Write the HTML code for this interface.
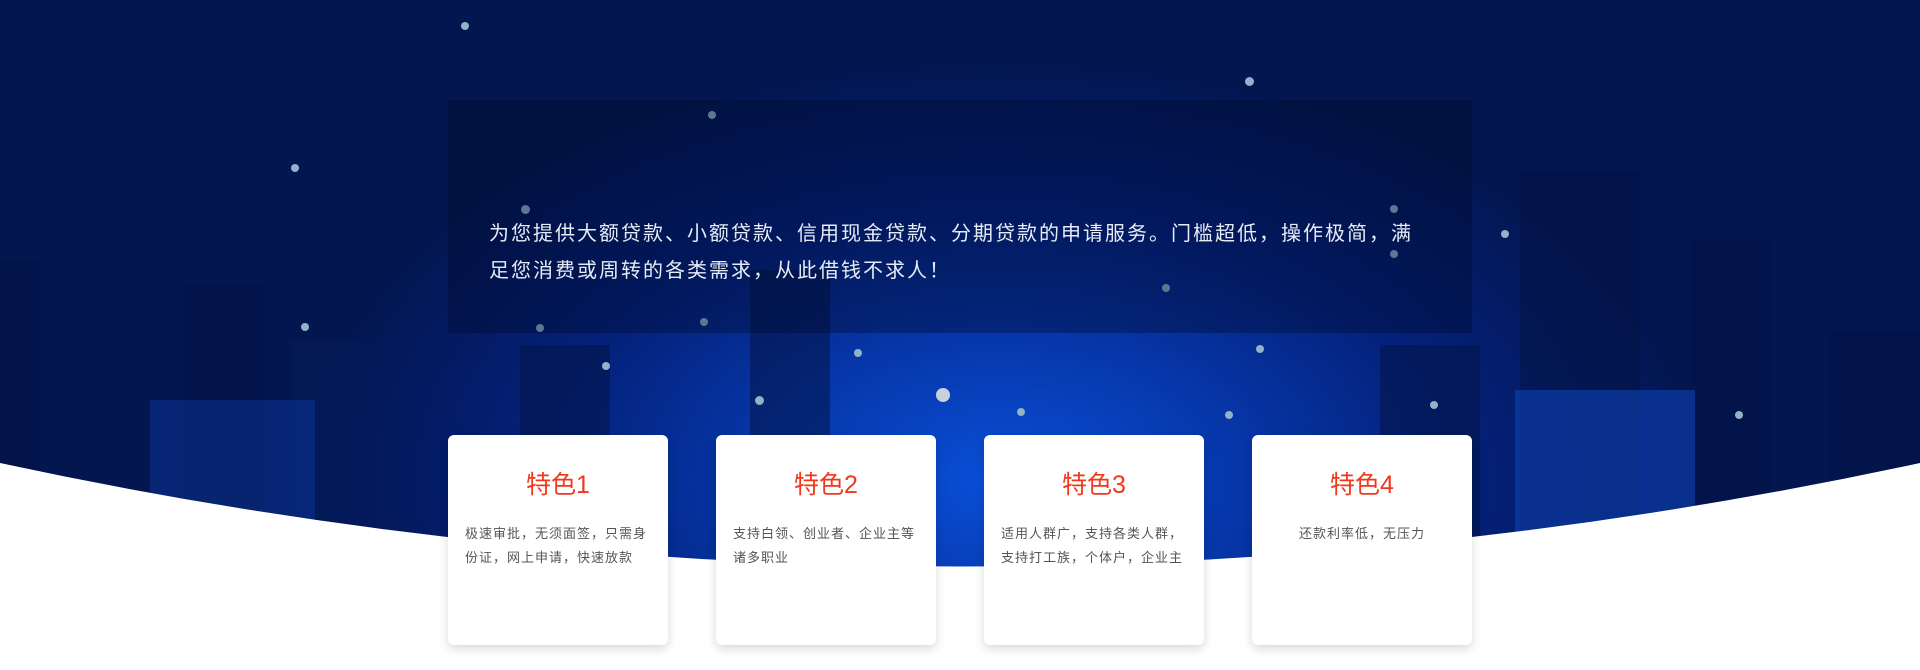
<!DOCTYPE html>
<html><head><meta charset="utf-8">
<style>
*{margin:0;padding:0;box-sizing:border-box}
body{width:1920px;height:670px;overflow:hidden;background:#fff;font-family:"Liberation Sans","Noto Sans CJK SC",sans-serif;position:relative}
.bg{position:absolute;left:0;top:0;width:1920px;height:670px;
background:radial-gradient(ellipse 700px 420px at 1000px 480px,#0a4fd8 0%,#0636a8 35%,#04217a 65%,#031650 100%);}
.bld{position:absolute;background:rgba(3,20,70,.55)}
.star{position:absolute;border-radius:50%;background:#8fb3c9}
.box{position:absolute;left:448px;top:100px;width:1024px;height:233px;background:rgba(0,10,40,.35)}
.box p{position:absolute;left:41px;top:116px;width:932px;color:#e6ecf6;font-size:20px;letter-spacing:2px;line-height:37px}
.card{position:absolute;top:435px;width:220px;height:210px;background:#fff;border-radius:6px;box-shadow:0 4px 10px rgba(0,0,0,.15)}
.card h3{font-weight:normal;color:#f0381c;font-size:25px;text-align:center;margin-top:34px;line-height:32px}
.card p{font-size:13px;letter-spacing:1px;color:#555;line-height:24px;padding:0 17px;margin-top:21px}
</style></head><body>
<div class="bg"></div>
<div class="bld" style="left:0;top:260px;width:40px;height:300px"></div>
<div class="bld" style="left:185px;top:285px;width:80px;height:250px"></div>
<div class="bld" style="left:290px;top:340px;width:110px;height:200px;background:rgba(3,25,90,.5)"></div>
<div class="bld" style="left:520px;top:345px;width:90px;height:200px"></div>
<div class="bld" style="left:750px;top:270px;width:80px;height:280px"></div>
<div class="bld" style="left:1380px;top:345px;width:100px;height:200px"></div>
<div class="bld" style="left:1520px;top:170px;width:120px;height:360px"></div>
<div class="bld" style="left:1690px;top:240px;width:80px;height:300px"></div>
<div class="bld" style="left:1830px;top:330px;width:90px;height:200px"></div>
<div class="bld" style="left:1515px;top:390px;width:180px;height:150px;background:rgba(15,70,190,.55)"></div>
<div class="bld" style="left:150px;top:400px;width:165px;height:140px;background:rgba(15,60,170,.4)"></div>
<div class="star" style="left:461px;top:22px;width:8px;height:8px"></div>
<div class="star" style="left:291px;top:164px;width:8px;height:8px"></div>
<div class="star" style="left:301px;top:323px;width:8px;height:8px"></div>
<div class="star" style="left:521px;top:205px;width:9px;height:9px"></div>
<div class="star" style="left:536px;top:324px;width:8px;height:8px"></div>
<div class="star" style="left:602px;top:362px;width:8px;height:8px"></div>
<div class="star" style="left:708px;top:111px;width:8px;height:8px"></div>
<div class="star" style="left:700px;top:318px;width:8px;height:8px"></div>
<div class="star" style="left:755px;top:396px;width:9px;height:9px"></div>
<div class="star" style="left:854px;top:349px;width:8px;height:8px"></div>
<div class="star" style="left:936px;top:388px;width:14px;height:14px;background:#c8d0da"></div>
<div class="star" style="left:1017px;top:408px;width:8px;height:8px"></div>
<div class="star" style="left:1162px;top:284px;width:8px;height:8px"></div>
<div class="star" style="left:1245px;top:77px;width:9px;height:9px"></div>
<div class="star" style="left:1256px;top:345px;width:8px;height:8px"></div>
<div class="star" style="left:1225px;top:411px;width:8px;height:8px"></div>
<div class="star" style="left:1390px;top:250px;width:8px;height:8px"></div>
<div class="star" style="left:1430px;top:401px;width:8px;height:8px"></div>
<div class="star" style="left:1501px;top:230px;width:8px;height:8px"></div>
<div class="star" style="left:1735px;top:411px;width:8px;height:8px"></div>
<div class="star" style="left:1390px;top:205px;width:8px;height:8px"></div>
<svg style="position:absolute;left:0;top:0" width="1920" height="670"><path d="M0,463 Q960,670 1920,463 L1920,670 L0,670 Z" fill="#fff"/></svg>
<div class="box"><p>为您提供大额贷款、小额贷款、信用现金贷款、分期贷款的申请服务。门槛超低，操作极简，满足您消费或周转的各类需求，从此借钱不求人！</p></div>
<div class="card" style="left:448px"><h3>特色1</h3><p>极速审批，无须面签，只需身份证，网上申请，快速放款</p></div>
<div class="card" style="left:716px"><h3>特色2</h3><p>支持白领、创业者、企业主等诸多职业</p></div>
<div class="card" style="left:984px"><h3>特色3</h3><p>适用人群广，支持各类人群，支持打工族，个体户，企业主</p></div>
<div class="card" style="left:1252px"><h3>特色4</h3><p style="text-align:center">还款利率低，无压力</p></div>
</body></html>
